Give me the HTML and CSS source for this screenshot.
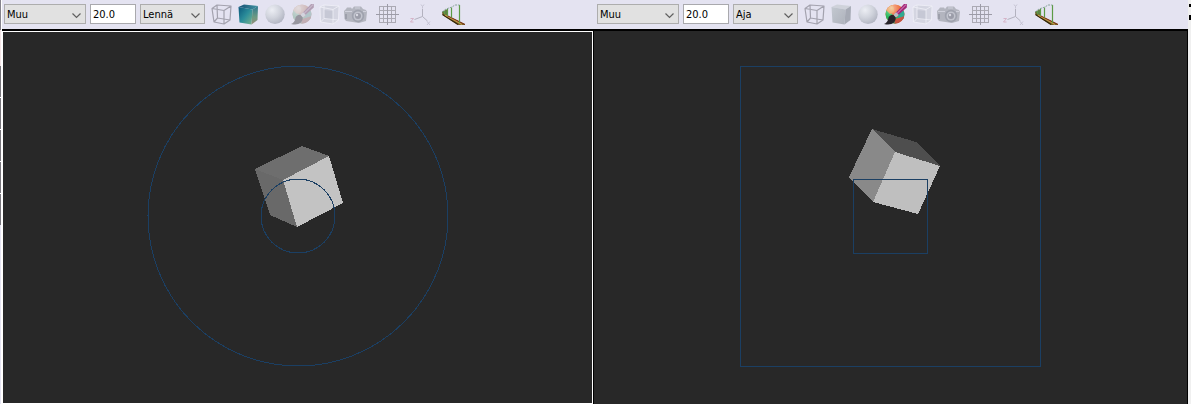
FILE: index.html
```html
<!DOCTYPE html>
<html lang="fi">
<head>
<meta charset="utf-8">
<title>Muu</title>
<link rel="stylesheet" href="styles.css">
</head>
<body>
<svg class="sprite" aria-hidden="true">
  <defs>
    <linearGradient id="cube-top" x1="0" x2="1"><stop offset="0" stop-color="#164f74"/><stop offset="1" stop-color="#3f93a0"/></linearGradient>
    <linearGradient id="cube-front" x1="0" y1="0" x2="1" y2="1"><stop offset="0" stop-color="#0b587c"/><stop offset=".5" stop-color="#2b8d9a"/><stop offset="1" stop-color="#7cb48c"/></linearGradient>
    <linearGradient id="cube-side" x1="0" y1="0" x2="0" y2="1"><stop offset="0" stop-color="#2c7890"/><stop offset=".6" stop-color="#6c9a82"/><stop offset="1" stop-color="#978d78"/></linearGradient>
    <linearGradient id="plain-front" x1="0" y1="0" x2="1" y2="1"><stop offset="0" stop-color="#c3c8d0"/><stop offset="1" stop-color="#aeb2bc"/></linearGradient>
    <radialGradient id="ball" cx=".35" cy=".28" r=".75"><stop offset="0" stop-color="#eceef4"/><stop offset=".55" stop-color="#d0d3dc"/><stop offset="1" stop-color="#b2b5c2"/></radialGradient>
    <radialGradient id="gloss" cx=".35" cy=".25" r=".8"><stop offset="0" stop-color="#fff" stop-opacity=".55"/><stop offset=".5" stop-color="#fff" stop-opacity="0"/><stop offset="1" stop-color="#123" stop-opacity=".3"/></radialGradient>
    <clipPath id="ball-clip"><circle cx="12" cy="12" r="9.5"/></clipPath>
  </defs>
  <symbol id="wire" viewBox="0 0 24 24">
    <path d="M8 3 22 4 21 18 8.500 16Z M3 6.500 15 8.500V22L5 20Z M3 6.500 8 3 M15 8.500 22 4 M15 22 21 18 M5 20 8.500 16" fill="none" stroke="#a3a2ae" stroke-width="1.200" stroke-linejoin="round"/>
  </symbol>
  <symbol id="cube" viewBox="0 0 24 24">
    <path d="M2.500 5 8 2.500 22 4 16.500 7.500Z" fill="url(#cube-top)"/>
    <path d="M2.500 5 16.500 7.500 15.500 22.500 3.500 20.500Z" fill="url(#cube-front)"/>
    <path d="M16.500 7.500 22 4 21.500 18 15.500 22.500Z" fill="url(#cube-side)"/>
  </symbol>
  <symbol id="cube-plain" viewBox="0 0 24 24">
    <path d="M2.500 5 8 2.500 22 4 16.500 7.500Z" fill="#cfd2da"/>
    <path d="M2.500 5 16.500 7.500 15.500 22.500 3.500 20.500Z" fill="url(#plain-front)"/>
    <path d="M16.500 7.500 22 4 21.500 18 15.500 22.500Z" fill="#a6aab5"/>
  </symbol>
  <symbol id="sphere" viewBox="0 0 24 24"><circle cx="12" cy="12.300" r="9.700" fill="url(#ball)"/></symbol>
  <symbol id="brush" viewBox="0 0 24 24">
    <g clip-path="url(#ball-clip)">
      <path d="M0 0H24V24H0Z" fill="#ee6a34"/>
      <path d="M0 9Q5 7 8 11T15 15L13 24H0Z" fill="#27b75a"/>
      <path d="M8 2Q12 5 11 10L7 12 3 8Z" fill="#e5913c"/>
      <path d="M14 10 24 8V17L15 18Z" fill="#22a98d"/>
      <path d="M12 17 22 14 20 24H11Z" fill="#d54a33"/>
      <path d="M0 0H24V24H0Z" fill="url(#gloss)"/>
    </g>
    <path d="M23.800 2 21 2 12.500 11 15 13.200 23.800 5.500Z" fill="#a3287a"/>
    <path d="M23 2.600 14 11.500" stroke="#d98bc0" stroke-width="1"/>
    <path d="M13.200 10.200 10 13.200 12.500 15.800 15.800 13Z" fill="#b9bcc6"/>
    <path d="M10.300 12.800Q5.500 13 5.200 17 4.500 20.500 1 22 7.500 23.500 11 20.500 13 18.500 12.800 15.500Z" fill="#28242a"/>
  </symbol>
  <symbol id="panorama" viewBox="0 0 24 24">
    <path d="M3 5 7 3 22 4 21.500 18 16 22 3.500 20Z" fill="#d4d5e1"/>
    <path d="M7 8 16 9V18L7 16.500Z" fill="#c6c8d5"/>
    <path d="M3 5 7 3 22 4 21.500 18 16 22 3.500 20Z M3 5 16 7.500V22 M16 7.500 22 4 M7 3V16.500L3.500 20 M7 16.500 21.500 18" fill="none" stroke="#f0f0f8" stroke-width=".8"/>
  </symbol>
  <symbol id="camera" viewBox="0 0 24 24">
    <path d="M0 9 2 7 3 5.500H7L8 7 10 4.500H17L19 7 22 8 23 10 22 19 15 21 2 19 .500 17Z" fill="#b3b5bf"/>
    <path d="M1 9.500H8 M11 6H16 M19 9.500H22" stroke="#d0d1dc" stroke-width="1.200"/>
    <path d="M2 12V17" stroke="#9d9fab" stroke-width="2"/>
    <circle cx="14" cy="14" r="6.200" fill="#9fa2ae"/>
    <circle cx="14" cy="14" r="4.500" fill="#c2c4ce"/>
    <circle cx="14" cy="14" r="3" fill="#9b9da9"/>
    <circle cx="13" cy="13" r="1.200" fill="#d8d9e2"/>
  </symbol>
  <symbol id="grid" viewBox="0 0 24 24">
    <path d="M4.500 4V21 M8.500 4V21 M16.500 4V21 M20.500 4V21 M4 4.500H21 M4 8.500H21 M4 16.500H21 M4 20.500H21" stroke="#abaab4" fill="none"/>
    <path d="M12.500 2V23 M1 12.500H24" stroke="#9c9ba7"/>
  </symbol>
  <symbol id="axes" viewBox="0 0 24 24">
    <path d="M14.500 7V14.500L6.500 17.500 M14.500 14.500 19.500 19" fill="none" stroke="#b3b2bf"/>
    <path d="M13 2.500 14.500 4.500 16 2.500 M14.500 4.500V6.500 M19 19.500 22 23 M22 19.500 19 23" fill="none" stroke="#c3c1d0" stroke-width=".9"/>
    <path d="M2.500 16.500H5.500L2.500 20H5.500" fill="none" stroke="#d2aec2" stroke-width=".9"/>
  </symbol>
  <symbol id="walk" viewBox="0 0 24 24">
    <path d="M1 10 6 7.500V14L10 15.500 24 22V23H17L1.500 13Z" fill="#74642a"/>
    <path d="M1 10 6 7.500V13Z" fill="#5f7f45"/>
    <path d="M1.500 12.500 17 22.500" stroke="#332608" stroke-width="1.200"/>
    <path d="M4 13 21 22.500" stroke="#c49a48" stroke-width="1.200"/>
    <path d="M6 13.500 24 22.500" stroke="#7c2e12" stroke-width="1"/>
    <path d="M3.500 9V12.500 M6.500 7V14 M10.500 5.500V15.500 M18.500 3V21" stroke="#5c9b45" stroke-width="1.200"/>
    <path d="M1 10 5 7 11 5 14 3H18.500" fill="none" stroke="#88a59a" stroke-dasharray="2 1"/>
  </symbol>
  <symbol id="chevron" viewBox="0 0 9 6"><path d="M.500 .500 4.500 4.500 8.500 .500" fill="none" stroke="#606060" stroke-width="1.200"/></symbol>
</svg>

<main class="workspace">
  <div class="edge edge-left"></div>

  <section class="pane">
    <div class="toolbar">
      <span class="picker picker-wide"><select aria-label="Kohde"><option>Muu</option></select><svg class="chevron"><use href="#chevron"/></svg></span>
      <input class="amount" type="text" value="20.0" aria-label="Arvo">
      <span class="picker picker-narrow"><select aria-label="Liike"><option>Lennä</option></select><svg class="chevron"><use href="#chevron"/></svg></span>
      <div class="tools">
        <button class="tool" aria-label="Rautalanka"><svg><use href="#wire"/></svg></button>
        <button class="tool" aria-label="Kuutio"><svg><use href="#cube"/></svg></button>
        <button class="tool" aria-label="Pallo"><svg><use href="#sphere"/></svg></button>
        <button class="tool tool-off" aria-label="Materiaali"><svg><use href="#brush"/></svg></button>
        <button class="tool" aria-label="Panoraama"><svg><use href="#panorama"/></svg></button>
        <button class="tool" aria-label="Kamera"><svg><use href="#camera"/></svg></button>
      </div>
      <div class="tools tools-spaced">
        <button class="tool" aria-label="Ruudukko"><svg><use href="#grid"/></svg></button>
        <button class="tool" aria-label="Akselit"><svg><use href="#axes"/></svg></button>
        <button class="tool" aria-label="Kulku"><svg><use href="#walk"/></svg></button>
      </div>
    </div>
    <div class="view view-active">
      <svg class="scene" viewBox="3 32 589 371" role="img" aria-label="Kuutio">
        <g shape-rendering="crispEdges">
          <path d="M255 169 302 146 329 156 283 180Z" fill="#6e6e6e"/>
          <path d="M255 169 283 180 297 227 270 215Z" fill="#696969"/>
          <path d="M283 180 329 156 343 203 297 227Z" fill="#c3c3c3"/>
        </g>
        <circle class="guide" cx="298" cy="216" r="150"/>
        <circle class="guide" cx="298" cy="216" r="37"/>
      </svg>
    </div>
  </section>

  <section class="pane">
    <div class="toolbar">
      <span class="picker picker-wide"><select aria-label="Kohde"><option>Muu</option></select><svg class="chevron"><use href="#chevron"/></svg></span>
      <input class="amount" type="text" value="20.0" aria-label="Arvo">
      <span class="picker picker-narrow"><select aria-label="Liike"><option>Aja</option></select><svg class="chevron"><use href="#chevron"/></svg></span>
      <div class="tools">
        <button class="tool" aria-label="Rautalanka"><svg><use href="#wire"/></svg></button>
        <button class="tool" aria-label="Kuutio"><svg><use href="#cube-plain"/></svg></button>
        <button class="tool" aria-label="Pallo"><svg><use href="#sphere"/></svg></button>
        <button class="tool" aria-label="Materiaali"><svg><use href="#brush"/></svg></button>
        <button class="tool" aria-label="Panoraama"><svg><use href="#panorama"/></svg></button>
        <button class="tool" aria-label="Kamera"><svg><use href="#camera"/></svg></button>
      </div>
      <div class="tools tools-spaced">
        <button class="tool" aria-label="Ruudukko"><svg><use href="#grid"/></svg></button>
        <button class="tool" aria-label="Akselit"><svg><use href="#axes"/></svg></button>
        <button class="tool" aria-label="Kulku"><svg><use href="#walk"/></svg></button>
      </div>
    </div>
    <div class="view view-idle">
      <svg class="scene" viewBox="594 31 593 373" role="img" aria-label="Kuutio">
        <g shape-rendering="crispEdges">
          <path d="M872 129 916 142 940 166 895 152Z" fill="#4e4e4e"/>
          <path d="M872 129 895 152 873 202 849 177Z" fill="#898989"/>
          <path d="M895 152 940 166 918 214 873 202Z" fill="#bfbfbf"/>
        </g>
        <rect class="guide" x="740.500" y="66.500" width="300" height="300"/>
        <rect class="guide" x="853.500" y="179.500" width="74" height="74"/>
      </svg>
    </div>
  </section>

  <div class="edge edge-right">
    <span class="mark mark-small"></span>
    <span class="mark"></span>
  </div>
</main>
</body>
</html>
```
FILE: styles.css
```css
* {
  box-sizing: border-box;
}

body {
  margin: 0;
  font-family: "DejaVu Sans Condensed", "DejaVu Sans", sans-serif;
  font-size: 11px;
  color: #000;
  background: #000;
}

.sprite {
  position: absolute;
  width: 0;
  height: 0;
}

.workspace {
  display: grid;
  grid-template-columns: 2px 1fr 1fr 3px;
  height: 100vh;
}

.pane {
  display: flex;
  flex-direction: column;
  min-width: 0;
}

.toolbar {
  display: flex;
  align-items: center;
  gap: 4px;
  height: 29px;
  padding: 0 0 1px 2px;
  background: #e4e3f1;
}

.picker {
  display: grid;
  align-items: center;
  height: 20px;
}

.picker-wide {
  width: 82px;
}

.picker-narrow {
  width: 65px;
}

.picker select,
.chevron {
  grid-area: 1 / 1;
}

.picker select,
.amount {
  appearance: none;
  width: 100%;
  height: 20px;
  margin: 0;
  padding: 0 2px;
  border: 1px solid #adadad;
  border-radius: 0;
  font: inherit;
  color: inherit;
}

.picker select {
  background: #e1e1e1;
}

.amount {
  width: 46px;
  border-color: #a9a9ad;
  background: #fff;
}

.chevron {
  justify-self: end;
  width: 9px;
  height: 6px;
  margin: 3px 5px 0 0;
  pointer-events: none;
}

.tools {
  display: flex;
  gap: 1px;
  margin-left: -1px;
}

.tools-spaced {
  gap: 7px;
  margin-left: 0;
  padding-left: 1px;
}

.tool {
  width: 26px;
  height: 24px;
  padding: 0 1px;
  border: 0;
  background: none;
}

.tool svg {
  display: block;
  width: 24px;
  height: 24px;
}

.tool-off svg {
  opacity: 0.4;
  filter: saturate(0.4);
}

.view {
  flex: 1;
  min-height: 0;
  background: #282828;
}

.view-active {
  margin: 2px 2px 0 0;
  border: 1px solid #fff;
}

.view-idle {
  margin-left: -1px;
  border: solid #000;
  border-width: 2px 1px 0 0;
}

.scene {
  display: block;
  width: 100%;
  height: 100%;
}

.guide {
  fill: none;
  stroke: #1b3f63;
  stroke-width: 1px;
  shape-rendering: crispEdges;
}

.edge-left {
  border-right: 1px solid #fff;
  background: linear-gradient(#85838c 0 30px, #f3e4e6 30px 66px, #77757b 66px 97px, #fff 97px 98px, #77757b 98px 129px, #fff 129px 130px, #77757b 130px 161px, #fff 161px 162px, #77757b 162px 193px, #fff 193px 194px, #77757b 194px 225px, #e4e3f1 225px);
}

.edge-right {
  display: flex;
  flex-direction: column;
  align-items: flex-end;
  gap: 8px;
  padding-top: 4px;
  background: #f0f0f0;
}

.mark {
  width: 2px;
  height: 5px;
  background: #000;
}

.mark-small {
  height: 3px;
}
```
